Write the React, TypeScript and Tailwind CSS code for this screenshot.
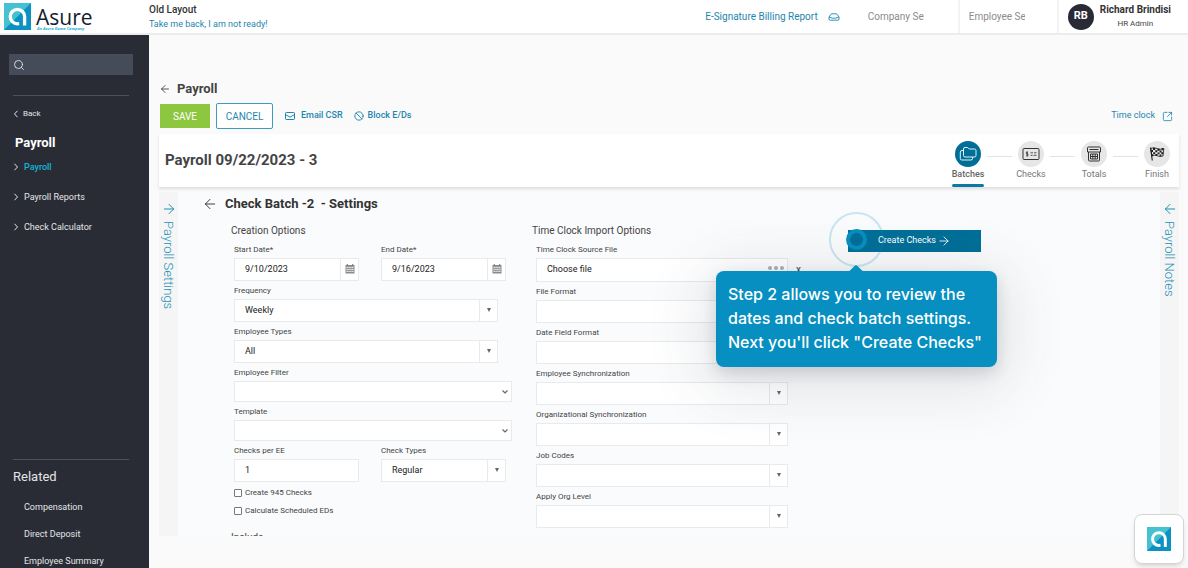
import type { ReactNode } from "react";
import { ArrowLeft, ArrowRight, Ban, Search, SquareArrowOutUpRight } from "lucide-react";

function Logo({ className }: { className: string }) {
  return (
    <svg viewBox="0 0 27 27" className={className} aria-hidden="true">
      <path d="M0 0H27V27H0Z" fill="#0b92c2" />
      <path d="M0 0H27L0 27Z" fill="#45c1d1" />
      <path d="M20.6 22.5V13.6A7.2 7.2 0 1 0 13.4 20.8L15.2 20.6" fill="none" stroke="#fff" strokeWidth="3.3" />
    </svg>
  );
}

function EnvelopeIcon() {
  return (
    <svg viewBox="0 0 12 10" className="h-2.5 w-3" fill="none" stroke="currentColor" strokeWidth="1">
      <rect x="1.5" y="1.5" width="9" height="7" rx="0.8" />
      <path d="M1.5 3.5L6 6.2L10.5 3.5" />
    </svg>
  );
}

function OpenMailIcon() {
  return (
    <svg viewBox="0 0 12 10" className="h-2.5 w-3" fill="none" stroke="currentColor" strokeWidth="0.9">
      <path d="M1 5L3 2.2Q3.4 1.8 4 1.8H8Q8.6 1.8 9 2.2L11 5V7.2Q11 8.2 10 8.2H2Q1 8.2 1 7.2Z" />
      <path d="M1 5L4.3 6.2H7.7L11 5" />
    </svg>
  );
}

function CalendarIcon() {
  return (
    <svg viewBox="0 0 10 10" className="size-2.5" aria-hidden="true">
      <path d="M0.5 1H9.5V9.5H0.5Z" fill="#8a8a8a" />
      <path d="M2.3 0V2M7.7 0V2" stroke="#777" strokeWidth="1" />
      <path
        d="M1.5 3.4H8.5M1.5 5.4H8.5M1.5 7.4H8.5"
        stroke="#f2f2f2"
        strokeWidth="1.1"
        strokeDasharray="1.3 0.6"
      />
    </svg>
  );
}

function Chevron({ left = false }: { left?: boolean }) {
  return (
    <svg viewBox="0 0 6 8" className="h-2 w-1.5" fill="none" stroke="currentColor" strokeWidth="1">
      <path d={left ? "M4.5 0.8L1.5 4L4.5 7.2" : "M1.5 0.8L4.5 4L1.5 7.2"} />
    </svg>
  );
}

function Header() {
  return (
    <header className="flex h-[35px] shrink-0 items-stretch border-b-2 border-[#ececed] bg-white">
      <div className="flex w-[149px] items-center gap-[5px] pl-1">
        <Logo className="size-[27px]" />
        <div className="flex flex-col pt-1">
          <span className="font-['Open_Sans'] text-[21px] leading-[20px] font-medium text-[#14202e]">Asure</span>
          <span className="pl-px font-['Open_Sans'] text-[4px] leading-[4px] font-bold text-[#28b0d8] italic">
            An Asure Demo Company
          </span>
        </div>
      </div>
      <div className="flex flex-1 flex-col justify-center gap-0.5">
        <span className="text-[10px] leading-3 font-medium text-[#333]">Old Layout</span>
        <a href="#old" className="text-[9px] leading-3 text-[#1d86ae]">
          Take me back, I am not ready!
        </a>
      </div>
      <a href="#billing" className="flex items-center gap-2.5 pr-7 text-[10px] text-[#1d86ae]">
        E-Signature Billing Report
        <OpenMailIcon />
      </a>
      <div className="flex w-[92px] items-center border-r-2 border-[#f3f3f4]">
        <input
          aria-label="Company search"
          placeholder="Company Search"
          className="w-14 bg-transparent text-[10px] outline-none placeholder:text-[#8b8b8b]"
        />
      </div>
      <div className="flex w-[99px] items-center border-r-2 border-[#f3f3f4] pl-[9px]">
        <input
          aria-label="Employee search"
          placeholder="Employee Search"
          className="w-14 bg-transparent text-[10px] outline-none placeholder:text-[#8b8b8b]"
        />
      </div>
      <div className="flex items-center gap-1.5 pr-[17px] pl-[9px]">
        <span className="flex size-[26px] items-center justify-center rounded-full bg-[#282b35] text-[11px] font-bold text-white">
          RB
        </span>
        <div className="flex flex-col items-center gap-0.5">
          <span className="text-[10px] leading-3 font-bold text-[#333]">Richard Brindisi</span>
          <span className="text-[8px] leading-3 text-[#444]">HR Admin</span>
        </div>
      </div>
    </header>
  );
}

const navItems = [
  { label: "Payroll", active: true },
  { label: "Payroll Reports", active: false },
  { label: "Check Calculator", active: false },
];

function Sidebar() {
  return (
    <aside className="flex w-[149px] shrink-0 flex-col bg-[#292c35] text-[#e4e5e8]">
      <label className="mx-[9px] mt-[19px] mr-4 flex h-[21px] items-center bg-[#454b59] pl-1">
        <Search className="size-3 shrink-0" strokeWidth={1.8} />
        <input aria-label="Search menu" className="w-full min-w-0 bg-transparent px-1 text-[9px] outline-none" />
      </label>
      <hr className="mt-5 mr-5 ml-[13px] border-[#4a5060]" />
      <a href="#back" className="mt-3 ml-[13px] flex items-center gap-1 text-[8px] leading-3">
        <Chevron left />
        Back
      </a>
      <h2 className="mt-[15px] ml-[15px] text-[13px] leading-4 font-bold text-white">Payroll</h2>
      <nav className="mt-2.5 ml-[13px] flex flex-col gap-[18px]">
        {navItems.map((item) => (
          <a
            key={item.label}
            href="#nav"
            className={
              item.active
                ? "flex items-center gap-[5px] text-[9px] leading-3 font-medium text-[#17b4d6]"
                : "flex items-center gap-[5px] text-[9px] leading-3"
            }
          >
            <span className="text-[#e4e5e8]">
              <Chevron />
            </span>
            {item.label}
          </a>
        ))}
      </nav>
      <div className="mt-auto flex h-[109px] flex-col">
        <hr className="mr-5 ml-[13px] border-[#4a5060]" />
        <h3 className="mt-[9px] ml-[13px] text-[13px] leading-4">Related</h3>
        <div className="mt-4 ml-6 flex flex-col gap-[15px] text-[9px] leading-3">
          <a href="#compensation">Compensation</a>
          <a href="#deposit">Direct Deposit</a>
          <a href="#summary">Employee Summary</a>
        </div>
      </div>
    </aside>
  );
}

function FoldersIcon() {
  return (
    <svg viewBox="0 0 18 16" className="h-4 w-[18px]" fill="none" stroke="currentColor" strokeWidth="0.9">
      <path d="M4.5 3Q4.5 1.5 6 1.5H8.7L10.2 3H15.5Q17 3 17 4.5V9.5Q17 11 15.5 11H6Q4.5 11 4.5 9.5Z" />
      <path d="M4.5 4.5H3Q1.3 4.5 1.3 6V12.5Q1.3 14 2.8 14H12Q13.5 14 13.5 12.5V11" />
    </svg>
  );
}

function CheckIcon() {
  return (
    <svg viewBox="0 0 18 14" className="h-3.5 w-[18px]" fill="none" stroke="currentColor" strokeWidth="1">
      <rect x="1" y="1.5" width="16" height="11" rx="1" />
      <path d="M5.9 5.2H4.4V6.9H5.9V8.8H4.2M5.2 4.4V9.6M8.5 5.8H11M12 5.8H14.5M8.5 8.3H10.5M11.5 8.3H14.5" strokeWidth="0.8" />
    </svg>
  );
}

function CalculatorIcon() {
  return (
    <svg viewBox="0 0 16 16" className="size-4" fill="none" stroke="currentColor" strokeWidth="1">
      <path d="M1.5 6V2Q1.5 1 2.5 1H13.5Q14.5 1 14.5 2V6Z" />
      <path d="M3.5 3.5H12.5M2.5 6V14Q2.5 15 3.5 15H12.5Q13.5 15 13.5 14V6" />
      <path d="M4.5 8H11.5V13H4.5ZM4.5 10.5H11.5M6.8 8V13M9.2 8V13" />
    </svg>
  );
}

function FlagIcon() {
  return (
    <svg viewBox="0 0 16 16" className="size-4 text-[#1c1c1c]" fill="currentColor">
      <path d="M1.5 1.5L3.3 14.5" stroke="currentColor" strokeWidth="1.1" />
      <path
        d="M1.8 2.5Q5 0.8 8 2.5T14.8 2.4L14 10Q11 11.2 8.5 9.8T2.8 10Z"
        fill="none"
        stroke="currentColor"
        strokeWidth="0.8"
      />
      <path d="M4 2H6.2V4H4ZM8.5 2.8H10.6V4.8H8.5ZM12.6 2.2H14.6V4.2H12.6ZM2.2 4H4V6H2.2ZM6.3 4.2H8.3V6.2H6.3ZM10.6 4.6H12.5V6.6H10.6ZM4.2 6.2H6.2V8H4.2ZM8.5 6.4H10.5V8.2H8.5ZM12.4 6.3H14.2V8.2H12.4ZM2.8 8.2H4.4V10H2.8ZM6.4 8.1H8.4V9.7H6.4ZM10.6 8.4H12.3V10.2H10.6Z" />
    </svg>
  );
}

function Step({ label, icon, active = false }: { label: string; icon: ReactNode; active?: boolean }) {
  return (
    <li className="flex w-8 flex-col items-center">
      <span
        className={
          active
            ? "flex size-[26px] items-center justify-center rounded-full bg-[#006f98] text-white"
            : "flex size-[26px] items-center justify-center rounded-full bg-[#e6e6e6] text-[#333]"
        }
      >
        {icon}
      </span>
      <span
        className={
          active
            ? "mt-px text-[9px] leading-3 font-medium text-[#666]"
            : "mt-px text-[9px] leading-3 text-[#777]"
        }
      >
        {label}
      </span>
      {active && <span className="mt-1 h-[3px] w-8 rounded-xs bg-[#0a7aa5]" />}
    </li>
  );
}

function StepLine() {
  return <li aria-hidden="true" className="mx-[3px] mt-[15px] h-px w-[25px] bg-[#e2e2e2]" />;
}

function SideTab({ label, icon }: { label: string; icon: ReactNode }) {
  return (
    <button
      type="button"
      className="flex w-[19px] shrink-0 flex-col items-center gap-1 bg-[#f5f5f5] pt-[9px] text-[#1d8fb8]"
    >
      {icon}
      <span className="text-[13px] leading-[19px] font-light [writing-mode:vertical-rl]">{label}</span>
    </button>
  );
}

const fieldLabel = "text-[8px] leading-4 text-[#444]";
const fieldText = "min-w-0 flex-1 appearance-none bg-transparent pl-2.5 text-[9px] text-[#222] outline-none";
const box = "flex h-[23px] items-stretch border border-[#e8eaec] bg-white";

function DateField({ id, label, value }: { id: string; label: string; value: string }) {
  return (
    <div className="flex w-[125px] flex-col">
      <label htmlFor={id} className={fieldLabel}>
        {label}
      </label>
      <div className={box}>
        <input id={id} defaultValue={value} className={fieldText} />
        <button
          type="button"
          aria-label={`Pick ${label}`}
          className="flex w-[18px] items-center justify-center border-l border-[#e8eaec] pb-0.5"
        >
          <CalendarIcon />
        </button>
      </div>
    </div>
  );
}

function ComboField({ id, label, value = "", width }: { id: string; label: string; value?: string; width: string }) {
  return (
    <div className={`flex flex-col ${width}`}>
      <label htmlFor={id} className={fieldLabel}>
        {label}
      </label>
      <div className={box}>
        <select id={id} className={fieldText}>
          <option>{value}</option>
        </select>
        <span className="flex w-[18px] items-center justify-center border-l border-[#e8eaec] pb-0.5 text-[#666]">
          <svg viewBox="0 0 6 6" className="size-1.5" fill="currentColor">
            <path d="M1 1H5L3 5Z" />
          </svg>
        </span>
      </div>
    </div>
  );
}

function PlainSelect({ id, label }: { id: string; label: string }) {
  return (
    <div className="flex flex-col">
      <label htmlFor={id} className={fieldLabel}>
        {label}
      </label>
      <div className="flex h-[21px] items-center border border-[#e8eaec] bg-white pr-0.5 text-[#666]">
        <select id={id} className={fieldText}>
          <option></option>
        </select>
        <svg viewBox="0 0 8 6" className="h-1.5 w-2" fill="none" stroke="currentColor" strokeWidth="1.2">
          <path d="M1.5 1.5L4 4L6.5 1.5" />
        </svg>
      </div>
    </div>
  );
}

function Tick({ id, label }: { id: string; label: string }) {
  return (
    <div className="flex h-[18px] items-center gap-[3px]">
      <input
        id={id}
        type="checkbox"
        className="size-2 appearance-none rounded-[1px] border border-[#777] bg-white checked:bg-[#006f98]"
      />
      <label htmlFor={id} className="text-[8px] leading-3 text-[#444]">
        {label}
      </label>
    </div>
  );
}

function CreationOptions() {
  return (
    <fieldset className="w-[281px] shrink-0">
      <legend className="text-[10px] leading-4 text-[#444]">Creation Options</legend>
      <div className="mt-[3px] flex flex-col gap-0.5 pl-[3px]">
        <div className="flex gap-[22px]">
          <DateField id="start" label="Start Date*" value="9/10/2023" />
          <DateField id="end" label="End Date*" value="9/16/2023" />
        </div>
        <ComboField id="frequency" label="Frequency" value="Weekly" width="w-[264px]" />
        <ComboField id="types" label="Employee Types" value="All" width="w-[264px]" />
        <PlainSelect id="filter" label="Employee Filter" />
        <PlainSelect id="template" label="Template" />
        <div className="flex gap-[22px]">
          <div className="flex w-[125px] flex-col">
            <label htmlFor="perEe" className={fieldLabel}>
              Checks per EE
            </label>
            <div className={box}>
              <input id="perEe" defaultValue="1" className={fieldText} />
            </div>
          </div>
          <ComboField id="checkTypes" label="Check Types" value="Regular" width="w-[125px]" />
        </div>
        <div className="flex flex-col">
          <Tick id="c945" label="Create 945 Checks" />
          <Tick id="eds" label="Calculate Scheduled EDs" />
        </div>
      </div>
      <h4 className="mt-2.5 text-[10px] leading-4 text-[#444]">Include</h4>
    </fieldset>
  );
}

const importFields = [
  { id: "fileFormat", label: "File Format" },
  { id: "dateFormat", label: "Date Field Format" },
  { id: "empSync", label: "Employee Synchronization" },
  { id: "orgSync", label: "Organizational Synchronization" },
  { id: "jobCodes", label: "Job Codes" },
  { id: "orgLevel", label: "Apply Org Level" },
];

function ImportOptions() {
  return (
    <fieldset className="w-[270px] shrink-0">
      <legend className="text-[10px] leading-4 text-[#444]">Time Clock Import Options</legend>
      <div className="mt-[3px] flex flex-col gap-0.5 pl-1">
        <div className="flex flex-col">
          <label htmlFor="source" className={fieldLabel}>
            Time Clock Source File
          </label>
          <div className="flex items-center gap-2">
            <div className="flex h-6 w-[252px] items-stretch border border-[#e8eaec] bg-white">
              <input id="source" defaultValue="Choose file" className={fieldText} />
              <button type="button" aria-label="Browse" className="flex items-center gap-0.5 px-[3px] pb-1">
                <span className="size-1 rounded-full bg-[#b0b0b0]" />
                <span className="size-1 rounded-full bg-[#b0b0b0]" />
                <span className="size-1 rounded-full bg-[#b0b0b0]" />
              </button>
            </div>
            <button type="button" aria-label="Clear file" className="text-[10px] leading-3 text-[#333]">
              x
            </button>
          </div>
        </div>
        {importFields.map((field) => (
          <ComboField key={field.id} id={field.id} label={field.label} width="w-[252px]" />
        ))}
      </div>
    </fieldset>
  );
}

function CreateChecks() {
  return (
    <div className="relative ml-[46px] w-[133px] shrink-0">
      <button
        type="button"
        className="flex h-[22px] w-full items-center justify-center gap-px bg-[#006f98] text-[9px] text-white"
      >
        Create Checks
        <ArrowRight className="size-3.5" strokeWidth={1.5} />
      </button>
      <span className="absolute -top-[18px] -left-[19px] size-[55px] rounded-full border-2 border-[#0b90c2]/20" />
      <span className="absolute -top-px -left-0.5 size-[21px] rounded-full border-4 border-[#068fc0] bg-[#006f98]" />
      <div
        role="tooltip"
        className="absolute top-[41px] -left-[132px] w-[281px] rounded-lg bg-[#068fc0] px-3 pt-[11px] pb-[13px] font-['Inter'] text-base leading-6 font-medium text-white shadow-[0_10px_60px_10px_rgba(60,70,90,0.14),0_6px_16px_rgba(0,0,0,0.14)]"
      >
        <span className="absolute -top-1 left-[134px] size-3 rotate-45 rounded-xs bg-[#068fc0]" />
        Step 2 allows you to review the dates and check batch settings. Next you'll click "Create Checks"
      </div>
    </div>
  );
}

function Batch() {
  return (
    <section className="min-w-0 flex-1 overflow-hidden bg-[#fafbfc]">
      <div className="mt-1 ml-6 flex items-center gap-[7px]">
        <ArrowLeft className="size-4 text-[#333]" strokeWidth={1.4} />
        <h2 className="text-[13px] leading-4 font-bold whitespace-pre text-[#333]">Check Batch -2  - Settings</h2>
      </div>
      <div className="mt-[11px] flex items-start pl-[53px]">
        <CreationOptions />
        <div className="ml-5">
          <ImportOptions />
        </div>
        <div className="mt-[7px]">
          <CreateChecks />
        </div>
      </div>
    </section>
  );
}

export default function App() {
  return (
    <div className="flex h-screen flex-col overflow-hidden bg-[#fafafa] font-['Roboto',sans-serif]">
      <Header />
      <div className="flex min-h-0 flex-1">
        <Sidebar />
        <main className="flex min-w-0 flex-1 flex-col pr-[9px] pb-8 pl-[10px]">
          <div className="mt-[46px] flex items-center gap-1.5">
            <ArrowLeft className="size-3 text-[#444]" strokeWidth={1.8} />
            <h1 className="text-[13px] leading-4 font-bold text-[#444]">Payroll</h1>
          </div>
          <div className="mt-1.5 flex h-[26px] items-center text-[9px] text-[#1d86ae]">
            <button type="button" className="ml-px h-6 w-[50px] bg-[#8dc63f] text-[10px] text-white">
              SAVE
            </button>
            <button
              type="button"
              className="ml-1.5 h-[26px] w-[57px] rounded-xs border border-[#3a9cc0] bg-white text-[10px]"
            >
              CANCEL
            </button>
            <button type="button" className="ml-[11px] flex items-center gap-[5px] font-medium">
              <EnvelopeIcon />
              Email CSR
            </button>
            <button type="button" className="ml-[11px] flex items-center gap-1 font-medium">
              <Ban className="size-2.5" strokeWidth={2.2} />
              Block E/Ds
            </button>
            <a href="#clock" className="mr-1.5 ml-auto flex items-center gap-[7px]">
              Time clock
              <SquareArrowOutUpRight className="size-[11px]" strokeWidth={1.8} />
            </a>
          </div>
          <div className="mt-[5px] flex h-[53px] shrink-0 items-start justify-between bg-white pl-1.5 shadow-[0_2px_3px_rgba(0,0,0,0.12)]">
            <h2 className="mt-4 text-[15px] leading-5 font-bold text-[#444]">Payroll 09/22/2023 - 3</h2>
            <ol className="mt-[7px] mr-1.5 flex items-start">
              <Step label="Batches" icon={<FoldersIcon />} active />
              <StepLine />
              <Step label="Checks" icon={<CheckIcon />} />
              <StepLine />
              <Step label="Totals" icon={<CalculatorIcon />} />
              <StepLine />
              <Step label="Finish" icon={<FlagIcon />} />
            </ol>
          </div>
          <div className="mt-[5px] flex min-h-0 flex-1">
            <SideTab label="Payroll Settings" icon={<ArrowRight className="size-4 shrink-0" strokeWidth={1.5} />} />
            <Batch />
            <SideTab label="Payroll Notes" icon={<ArrowLeft className="size-4 shrink-0" strokeWidth={1.5} />} />
          </div>
        </main>
      </div>
      <button
        type="button"
        aria-label="Open guide"
        className="fixed right-1 bottom-1 flex size-[50px] items-center justify-center rounded-lg border border-[#d4d4d6] bg-white shadow-md"
      >
        <Logo className="size-6" />
      </button>
    </div>
  );
}
